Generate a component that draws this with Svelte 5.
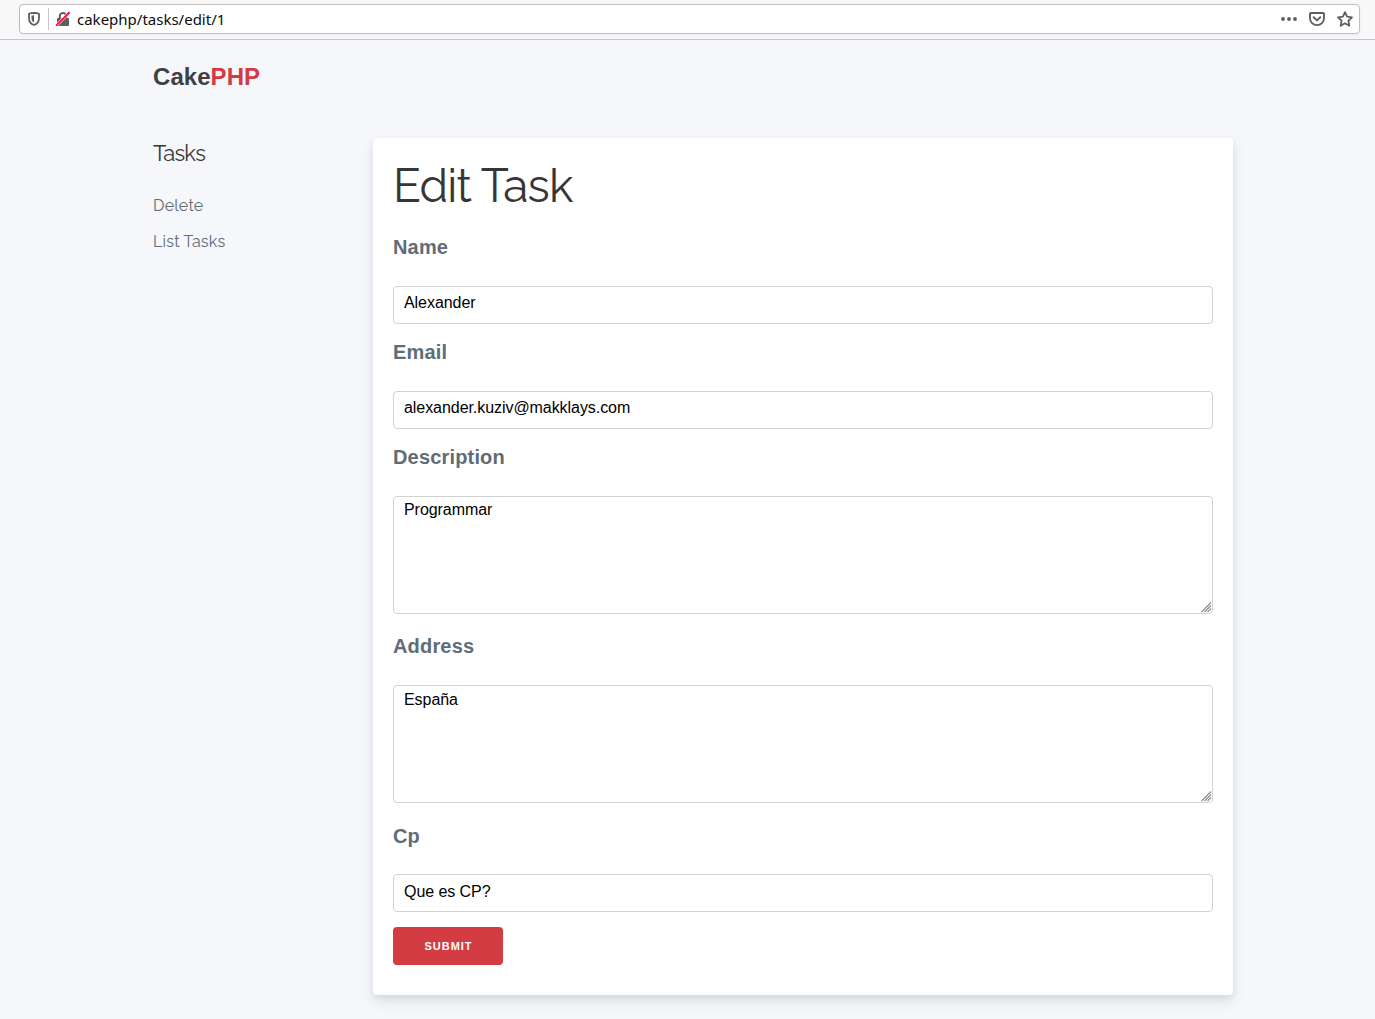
<script>
  const fields = [
    { id: 'name', label: 'Name', value: 'Alexander' },
    { id: 'email', label: 'Email', value: 'alexander.kuziv@makklays.com' },
    { id: 'description', label: 'Description', value: 'Programmar', multiline: true },
    { id: 'address', label: 'Address', value: 'España', multiline: true },
    { id: 'cp', label: 'Cp', value: 'Que es CP?' }
  ];
</script>

<div class="page">
  <div class="toolbar">
    <div class="urlbar">
      <svg class="shield" width="14" height="16" viewBox="0 0 14 16">
        <path d="M7 1.9C5.3 2 3.3 2.2 2 2.8V7.2C2 10.7 4.2 13 7 14C9.8 13 12 10.7 12 7.2V2.8C10.7 2.2 8.7 2 7 1.9Z" fill="none" stroke="#5e5e5f" stroke-width="1.8" stroke-linejoin="round" />
        <path d="M7 4.2C6 4.3 5.2 4.4 4.5 4.6V7.2C4.5 9.3 5.5 10.7 7 11.5Z" fill="#5e5e5f" />
      </svg>
      <span class="divider"></span>
      <svg class="lock" width="16" height="16" viewBox="0 0 16 16">
        <path d="M4.8 8V5.1a3.2 3.2 0 0 1 6.4 0V8" fill="none" stroke="#5e5e5f" stroke-width="2" />
        <rect x="2" y="7" width="12" height="8" rx="1" fill="#5e5e5f" />
        <path d="M1.4 14.5L14.4 1.5" stroke="#fff" stroke-width="3" />
        <path d="M1.7 14.1L14.1 1.7" stroke="#f5123f" stroke-width="2" stroke-linecap="round" />
      </svg>
      <span class="url">cakephp/tasks/edit/1</span>
      <div class="actions">
        <svg width="16" height="16" viewBox="0 0 16 16" fill="#5e5e5f">
          <circle cx="2" cy="8" r="1.9" /><circle cx="8" cy="8" r="1.9" /><circle cx="14" cy="8" r="1.9" />
        </svg>
        <svg width="16" height="16" viewBox="0 0 16 16" fill="none" stroke="#5e5e5f" stroke-width="1.9" stroke-linecap="round" stroke-linejoin="round">
          <path d="M1.9 2H14.1Q15 2 15 2.9V7.2A7 6.9 0 0 1 1 7.2V2.9Q1 2 1.9 2Z" />
          <path d="M4.7 6.2L8 9.4L11.3 6.2" />
        </svg>
        <svg width="16" height="16" viewBox="0 0 16 16" fill="none" stroke="#5e5e5f" stroke-width="1.8" stroke-linejoin="round">
          <path d="M8 1.2L10.1 5.7L15 6.3L11.4 9.7L12.3 14.7L8 12.3L3.7 14.7L4.6 9.7L1 6.3L5.9 5.7Z" />
        </svg>
      </div>
    </div>
  </div>

  <div class="container">
    <nav class="brand">Cake<span>PHP</span></nav>
    <main>
      <aside>
        <h4>Tasks</h4>
        <a href="#delete">Delete</a>
        <a href="#list">List Tasks</a>
      </aside>
      <form class="card" onsubmit={(e) => e.preventDefault()}>
        <h3>Edit Task</h3>
        {#each fields as f}
          <div class="field {f.id}" class:tall={f.multiline}>
            <label for={f.id}>{f.label}</label>
            {#if f.multiline}
              <div class="area">
                <textarea id={f.id} value={f.value} spellcheck="false"></textarea>
                <svg class="grip" width="11" height="11" viewBox="0 0 11 11" stroke="#8c8c8c" stroke-width="1.1">
                  <path d="M0.5 10L10 0.5M3.5 10L10 3.5M6.5 10L10 6.5" />
                </svg>
              </div>
            {:else}
              <input id={f.id} type="text" value={f.value} />
            {/if}
          </div>
        {/each}
        <button type="submit">Submit</button>
      </form>
    </main>
  </div>
</div>

<style>
  :global(body) { background: #f5f7fb; }
  .page, .page * { box-sizing: border-box; }
  .page {
    height: 1019px;
    overflow: hidden;
    background: #f5f7fb;
    color: #606c76;
    font-family: "Liberation Sans", Arial, sans-serif;
  }
  .toolbar {
    height: 40px;
    padding: 4px 15px 0 19px;
    background: #f9f9fa;
    border-bottom: 1px solid #c4c4c5;
  }
  .urlbar {
    display: flex;
    align-items: center;
    height: 30px;
    padding: 0 6px 0 7px;
    background: #fff;
    border: 1px solid #bfbfc0;
    border-radius: 4px;
    box-shadow: 0 1px 4px rgba(0, 0, 0, 0.06);
  }
  svg { display: block; flex: none; }
  .divider { width: 1px; height: 22px; margin: 0 6px 0 7px; background: #c6c6c7; }
  .url {
    margin-left: 6px;
    color: #0c0c0d;
    font: 15px/20px "Noto Sans", "Open Sans", sans-serif;
    white-space: nowrap;
  }
  .actions { display: flex; gap: 12px; margin-left: auto; }
  .container { width: 1080px; margin-left: 153px; }
  .brand {
    height: 98px;
    padding-top: 19px;
    color: #404041;
    font-size: 24px;
    font-weight: 700;
    line-height: 36px;
    letter-spacing: 0.05px;
  }
  .brand span { color: #d33c43; }
  main { display: flex; }
  aside {
    display: flex;
    flex-direction: column;
    width: 220px;
    font-family: Raleway, Lato, sans-serif;
  }
  h4 {
    margin: 0 0 24px;
    color: #363637;
    font-size: 22px;
    font-weight: 400;
    line-height: 30px;
    letter-spacing: -0.8px;
  }
  aside a {
    height: 36px;
    color: #606c76;
    font-size: 16px;
    line-height: 28px;
    letter-spacing: 0.22px;
    text-decoration: none;
  }
  .card {
    width: 860px;
    height: 857px;
    padding: 20px;
    background: #fff;
    border-radius: 4px;
    box-shadow: 0 7px 14px 0 rgba(60, 66, 87, 0.1), 0 3px 6px 0 rgba(0, 0, 0, 0.07);
  }
  h3 {
    height: 72px;
    margin: 0;
    color: #363637;
    font: 400 46px/57px Raleway, Lato, sans-serif;
    letter-spacing: -0.8px;
  }
  .field { margin-bottom: 11px; }
  .field.tall, .field.cp { margin-bottom: 15px; }
  label {
    display: block;
    height: 56px;
    font-size: 20px;
    font-weight: 700;
    line-height: 34px;
    letter-spacing: 0.17px;
  }
  .cp label { line-height: 36px; }
  input, textarea {
    display: block;
    width: 100%;
    margin: 0;
    background: transparent;
    border: 1px solid #d1d1d1;
    border-radius: 4px;
    outline: none;
    color: #000;
    font: 16px/18px "Liberation Sans", Arial, sans-serif;
    letter-spacing: -0.06px;
  }
  input { height: 38px; padding: 4px 10px 9px; }
  .cp input { padding: 5px 10px 8px; }
  .area { position: relative; }
  textarea { height: 118px; padding: 4px 10px; resize: none; overflow: hidden; }
  .address textarea { padding-top: 5px; }
  .grip { position: absolute; right: 1px; bottom: 1px; }
  button {
    display: block;
    width: 110px;
    height: 38px;
    padding: 0 0 0 1px;
    background: #d33c43;
    border: 0;
    border-radius: 4px;
    color: #fff;
    font: 700 11px/38px "Liberation Sans", Arial, sans-serif;
    letter-spacing: 1px;
    text-transform: uppercase;
  }
</style>
